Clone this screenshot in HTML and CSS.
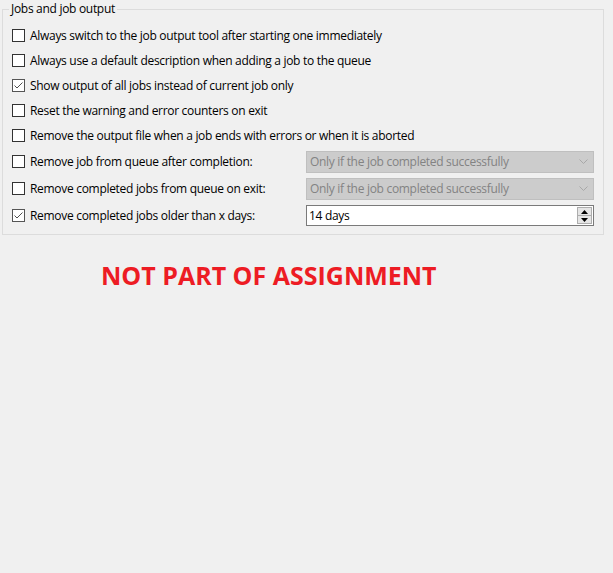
FILE: index.html
```html
<!DOCTYPE html>
<html>
<head>
<meta charset="utf-8">
<link rel="stylesheet" href="styles.css">
</head>
<body>
<fieldset class="group">
  <legend class="group-title">Jobs and job output</legend>
  <div class="row">
    <label class="check"><span class="box"></span><span class="text">Always switch to the job output tool after starting one immediately</span></label>
  </div>
  <div class="row">
    <label class="check"><span class="box"></span><span class="text">Always use a default description when adding a job to the queue</span></label>
  </div>
  <div class="row">
    <label class="check"><span class="box checked"><svg viewBox="0 0 11 11" width="11" height="11"><path d="M1.5 5.5 L4 8 L9.5 2.5" fill="none" stroke="#505050" stroke-width="1"/></svg></span><span class="text">Show output of all jobs instead of current job only</span></label>
  </div>
  <div class="row">
    <label class="check"><span class="box"></span><span class="text">Reset the warning and error counters on exit</span></label>
  </div>
  <div class="row">
    <label class="check"><span class="box"></span><span class="text">Remove the output file when a job ends with errors or when it is aborted</span></label>
  </div>
  <div class="row tall">
    <label class="check col"><span class="box"></span><span class="text">Remove job from queue after completion:</span></label>
    <div class="combo"><span class="combo-text">Only if the job completed successfully</span><svg class="chev" viewBox="0 0 9 5" width="9" height="5"><path d="M0.5 0.5 L4.5 4.5 L8.5 0.5" fill="none" stroke="#a8a8a8" stroke-width="1"/></svg></div>
  </div>
  <div class="row tall">
    <label class="check col"><span class="box"></span><span class="text">Remove completed jobs from queue on exit:</span></label>
    <div class="combo"><span class="combo-text">Only if the job completed successfully</span><svg class="chev" viewBox="0 0 9 5" width="9" height="5"><path d="M0.5 0.5 L4.5 4.5 L8.5 0.5" fill="none" stroke="#a8a8a8" stroke-width="1"/></svg></div>
  </div>
  <div class="row tall">
    <label class="check col"><span class="box checked"><svg viewBox="0 0 11 11" width="11" height="11"><path d="M1.5 5.5 L4 8 L9.5 2.5" fill="none" stroke="#505050" stroke-width="1"/></svg></span><span class="text">Remove completed jobs older than x days:</span></label>
    <div class="spin">
      <span class="spin-text">14 days</span>
      <div class="spin-buttons">
        <span class="spin-btn"><svg viewBox="0 0 7 4" width="7" height="4"><path d="M3.5 0 L7 4 L0 4 Z" fill="#000"/></svg></span>
        <span class="spin-btn"><svg viewBox="0 0 7 4" width="7" height="4"><path d="M0 0 L7 0 L3.5 4 Z" fill="#000"/></svg></span>
      </div>
    </div>
  </div>
</fieldset>
<div class="notice">NOT PART OF ASSIGNMENT</div>
</body>
</html>
```
FILE: styles.css
```css
html, body {
  margin: 0;
  padding: 0;
  background: #f0f0f0;
}
body {
  width: 613px;
  height: 573px;
  font-family: "Open Sans", "Noto Sans", sans-serif;
  font-size: 12px;
  color: #000;
}
.group {
  box-sizing: border-box;
  width: 602px;
  margin: 0 0 0 2px;
  padding: 5px 9px 5px 9px;
  border: 1px solid #dcdcdc;
  min-width: 0;
}
.group-title {
  height: 18px;
  line-height: 18px;
  padding: 0 2px;
  margin-left: -3px;
  letter-spacing: -0.3px;
}
.row {
  height: 25px;
  display: flex;
  align-items: center;
}
.row.tall {
  height: 27px;
}
.check {
  display: flex;
  align-items: center;
}
.check.col {
  width: 294px;
}
.box {
  box-sizing: border-box;
  width: 13px;
  height: 13px;
  border: 1px solid #333;
  background: #fff;
  margin-right: 5px;
  flex: none;
  display: flex;
  align-items: center;
  justify-content: center;
}
.box.checked {
  border-color: #555;
}
.text {
  white-space: nowrap;
  letter-spacing: -0.3px;
}
.combo {
  box-sizing: border-box;
  width: 288px;
  height: 22px;
  background: #cccccc;
  border: 1px solid #bfbfbf;
  display: flex;
  align-items: center;
  justify-content: space-between;
  padding: 0 5px 0 3px;
  color: #838383;
}
.combo-text {
  letter-spacing: -0.3px;
  white-space: nowrap;
}
.spin {
  box-sizing: border-box;
  width: 288px;
  height: 21px;
  background: #fff;
  border: 1px solid #7a7a7a;
  display: flex;
  align-items: center;
  justify-content: space-between;
  padding: 0 1px 0 2px;
}
.spin-text {
  letter-spacing: -0.3px;
}
.spin-buttons {
  display: flex;
  flex-direction: column;
  width: 15px;
  height: 17px;
  border: 1px solid #adadad;
  box-sizing: border-box;
  background: #e5e5e5;
}
.spin-btn {
  flex: 1;
  display: flex;
  align-items: center;
  justify-content: center;
}
.spin-btn + .spin-btn {
  border-top: 1px solid #adadad;
}
.notice {
  margin: 24px 0 0 101px;
  font-family: "Open Sans", "Noto Sans", sans-serif;
  font-weight: bold;
  font-size: 25px;
  line-height: 32px;
  color: #ed1c24;
  white-space: nowrap;
}
```
